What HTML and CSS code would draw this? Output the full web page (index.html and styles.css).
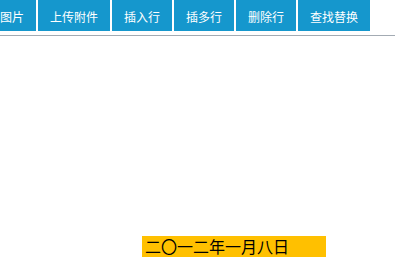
FILE: index.html
```html
<!DOCTYPE html>
<html>
<head>
<meta charset="utf-8">
<link rel="stylesheet" href="styles.css">
</head>
<body>
<div class="toolbar">
  <div class="btn btn-first">图片</div>
  <div class="btn">上传附件</div>
  <div class="btn">插入行</div>
  <div class="btn">插多行</div>
  <div class="btn">删除行</div>
  <div class="btn">查找替换</div>
</div>
<div class="divider"></div>
<div class="content">
  <div class="date">二〇一二年一月八日</div>
</div>
</body>
</html>
```
FILE: styles.css
```css
html, body {
  margin: 0;
  padding: 0;
  background: #ffffff;
}
body {
  width: 395px;
  height: 276px;
  overflow: hidden;
  font-family: "Noto Sans CJK SC", "Noto Sans", sans-serif;
}
.toolbar {
  display: flex;
  gap: 2px;
  height: 31px;
  margin-left: -12px;
}
.btn {
  background: #1597cd;
  color: #ffffff;
  font-size: 12px;
  line-height: 14px;
  padding: 10px 12px 0;
  box-sizing: border-box;
  height: 31px;
  white-space: nowrap;
}
.divider {
  margin-top: 4px;
  height: 1px;
  background: #a3abb3;
}
.content {
  padding-top: 200px;
  padding-left: 142px;
}
.date {
  width: 184px;
  height: 21px;
  box-sizing: border-box;
  background: #ffc000;
  color: #000000;
  font-size: 16px;
  line-height: 21px;
  padding-left: 3px;
  white-space: nowrap;
}
```
